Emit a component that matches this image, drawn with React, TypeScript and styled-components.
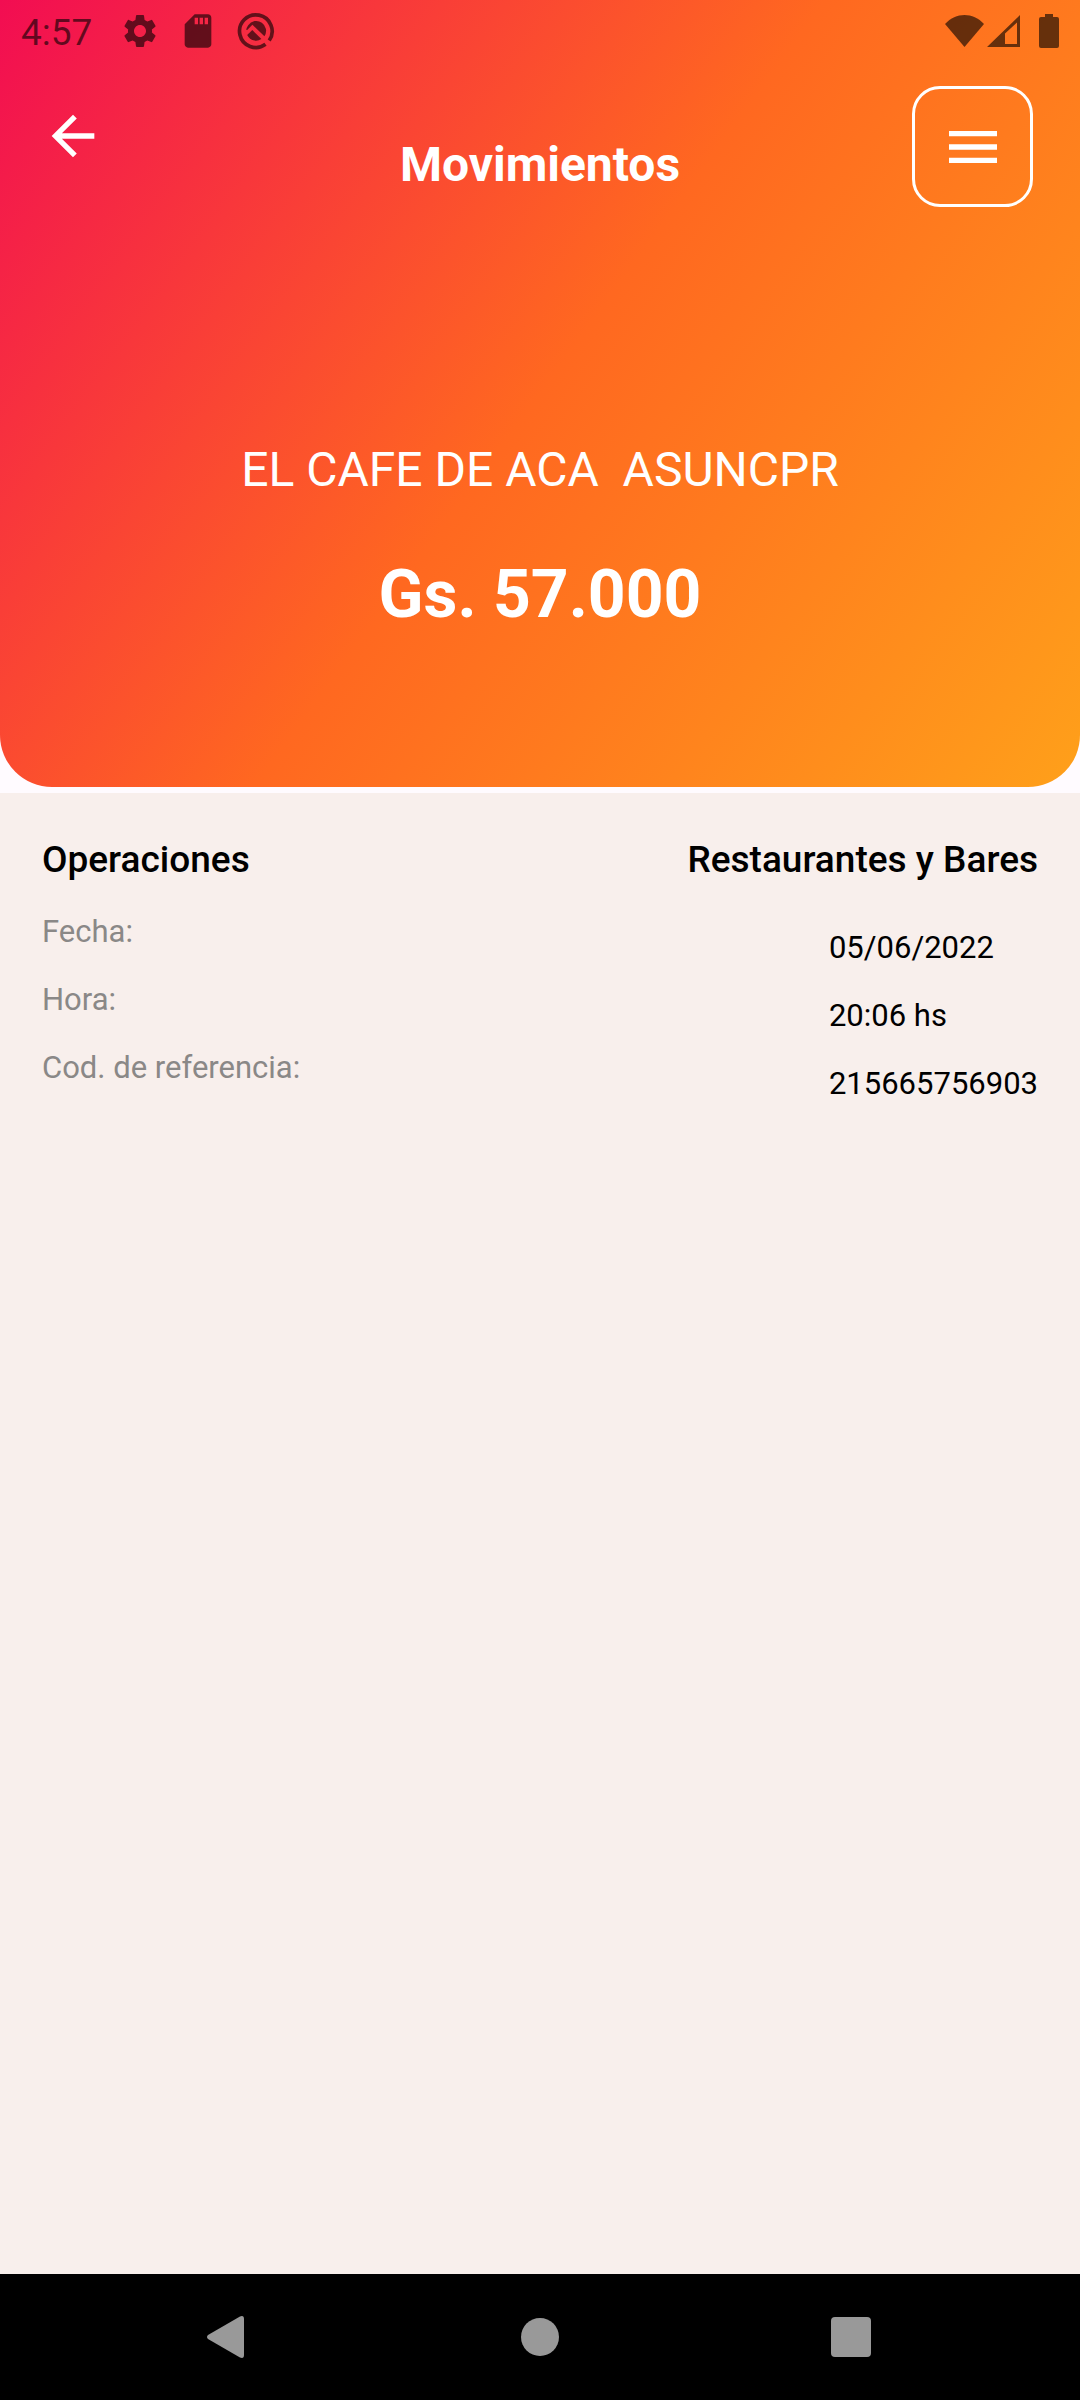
import React from "react";
import styled, { createGlobalStyle } from "styled-components";

const GlobalStyle = createGlobalStyle`
  *, *::before, *::after { box-sizing: border-box; }
  body {
    margin: 0;
    background: #fffbff;
    font-family: Roboto, "Noto Sans", sans-serif;
    color: #000;
  }
`;

const Screen = styled.div`
  display: flex;
  flex-direction: column;
  min-height: 100vh;
`;

const Hero = styled.header`
  margin-bottom: 6px;
  padding-bottom: 153px;
  color: #fff;
  background: linear-gradient(126deg, #f20d52 0%, #ff6820 50%, #ffa01a 100%);
  border-radius: 0 0 52px 52px;
`;

const StatusBar = styled.div`
  display: flex;
  align-items: center;
  height: 66px;
  padding: 0 21px;
  color: rgba(0, 0, 0, 0.6);
`;

const Clock = styled.time`
  margin-right: 28px;
  font-size: 37px;
  line-height: 44px;
`;

const StatusIcons = styled.div<{ $gap: number; $end?: boolean }>`
  display: flex;
  align-items: center;
  gap: ${(p) => p.$gap}px;
  margin-left: ${(p) => (p.$end ? "auto" : "0")};
  padding-bottom: 4px;

  svg {
    display: block;
    fill: currentColor;
  }
`;

const Battery = styled.svg`
  margin-left: 16px;
`;

const TopBar = styled.div`
  display: grid;
  grid-template-columns: 1fr auto 1fr;
  align-items: start;
  padding: 20px 47px 0;
`;

const IconButton = styled.button<{ $outlined?: boolean }>`
  display: flex;
  align-items: center;
  justify-content: center;
  padding: 0;
  color: inherit;
  background: none;
  cursor: pointer;
  width: ${(p) => (p.$outlined ? 121 : 52)}px;
  height: ${(p) => (p.$outlined ? 121 : 100)}px;
  border: ${(p) => (p.$outlined ? "3px solid #fff" : "0")};
  border-radius: 28px;
  justify-self: ${(p) => (p.$outlined ? "end" : "start")};

  svg {
    display: block;
    flex-shrink: 0;
    fill: currentColor;
  }
`;

const Title = styled.h1`
  margin: 51px 0 0;
  font-size: 48px;
  line-height: 56px;
  font-weight: 700;
`;

const Summary = styled.div`
  display: flex;
  flex-direction: column;
  align-items: center;
  gap: 58px;
  padding: 235px 42px 0;
  text-align: center;
`;

const Merchant = styled.p`
  margin: 0;
  font-size: 48px;
  line-height: 56px;
  white-space: pre-wrap;
`;

const Amount = styled.p`
  margin: 0;
  font-size: 66px;
  line-height: 78px;
  font-weight: 700;
`;

const Details = styled.main`
  flex: 1;
  padding: 45px 42px;
  background: #f8efec;
`;

const DetailsHeader = styled.div`
  display: flex;
  justify-content: space-between;
`;

const Heading = styled.h2`
  margin: 0;
  font-size: 37px;
  line-height: 44px;
  font-weight: 500;
`;

const Fields = styled.dl`
  display: grid;
  grid-template-columns: 1fr auto;
  row-gap: 16px;
  margin: 32px 0 0;
  font-size: 31px;
  line-height: 36px;
`;

const Label = styled.dt`
  color: #8a8887;
`;

const Value = styled.dd`
  margin: 0;
  padding-top: 16px;
`;

const NavBar = styled.nav`
  display: grid;
  grid-template-columns: repeat(3, 1fr);
  height: 126px;
  padding: 0 73px;
  background: #000;
`;

const NavButton = styled.button`
  display: flex;
  align-items: center;
  justify-content: center;
  padding: 0;
  border: 0;
  background: none;
  cursor: pointer;

  svg {
    display: block;
    fill: #999;
  }
`;

const fields = [
  { label: "Fecha:", value: "05/06/2022" },
  { label: "Hora:", value: "20:06 hs" },
  { label: "Cod. de referencia:", value: "215665756903" },
];

export default function App() {
  return (
    <>
      <GlobalStyle />
      <Screen>
        <Hero>
          <StatusBar>
            <Clock>4:57</Clock>
            <StatusIcons $gap={18}>
              <svg width="40" height="40" viewBox="0 0 24 24" aria-hidden="true">
                <path d="M19.14 12.94c.04-.3.06-.61.06-.94 0-.32-.02-.64-.07-.94l2.03-1.58a.49.49 0 0 0 .12-.61l-1.92-3.32a.488.488 0 0 0-.59-.22l-2.39.96c-.5-.38-1.03-.7-1.62-.94l-.36-2.54a.484.484 0 0 0-.48-.41h-3.84c-.24 0-.43.17-.47.41l-.36 2.54c-.59.24-1.13.57-1.62.94l-2.39-.96c-.22-.08-.47 0-.59.22L2.74 8.87c-.12.21-.08.47.12.61l2.03 1.58c-.05.3-.09.63-.09.94s.02.64.07.94l-2.03 1.58a.49.49 0 0 0-.12.61l1.92 3.32c.12.22.37.29.59.22l2.39-.96c.5.38 1.03.7 1.62.94l.36 2.54c.05.24.24.41.48.41h3.84c.24 0 .44-.17.47-.41l.36-2.54c.59-.24 1.13-.56 1.62-.94l2.39.96c.22.08.47 0 .59-.22l1.92-3.32c.12-.22.07-.47-.12-.61l-2.01-1.58zM12 15.6c-1.98 0-3.6-1.62-3.6-3.6s1.62-3.6 3.6-3.6 3.6 1.62 3.6 3.6-1.62 3.6-3.6 3.6z" />
              </svg>
              <svg width="40" height="40" viewBox="0 0 24 24" aria-hidden="true">
                <path d="M18 2h-8L4.020 8 4 20c0 1.100.9 2 2 2h12c1.100 0 2-.9 2-2V4c0-1.100-.9-2-2-2zm-6 6h-2V4h2v4zm3 0h-2V4h2v4zm3 0h-2V4h2v4z" />
              </svg>
              <svg width="40" height="40" viewBox="0 0 40 40" aria-hidden="true">
                <path d="M29.500 33.300A16.300 16.300 0 1 1 33.200 29.500" style={{ fill: "none" }} stroke="currentColor" strokeWidth="3.700" />
                <path d="M12.200 14.200A9.700 9.700 0 0 1 28.400 25.300L16.400 13.800L11.200 18.900L10.300 19A9.700 9.700 0 0 1 12.200 14.200Z" />
                <path d="M11.200 24.100L16.300 19L25.400 28.100A9.700 9.700 0 0 1 11.200 24.100Z" />
              </svg>
            </StatusIcons>
            <StatusIcons $gap={3} $end>
              <svg width="39" height="32" viewBox="0 0 39 32" aria-hidden="true">
                <path d="M0 9C11-3 28-3 39 9L19.500 32Z" />
              </svg>
              <svg width="33" height="32" viewBox="0 0 33 32" aria-hidden="true">
                <path fillRule="evenodd" d="M0 32L33 0V32ZM18 18.500V29H30V7.500Z" />
              </svg>
              <Battery width="20" height="34" viewBox="0 0 20 34" aria-hidden="true">
                <path d="M6 0H14V3H18Q20 3 20 5V32Q20 34 18 34H2Q0 34 0 32V5Q0 3 2 3H6Z" />
              </Battery>
            </StatusIcons>
          </StatusBar>

          <TopBar>
            <IconButton type="button" aria-label="Volver">
              <svg width="64" height="64" viewBox="0 0 24 24" aria-hidden="true">
                <path d="M20 11H7.830l5.590-5.590L12 4l-8 8 8 8 1.410-1.410L7.830 13H20v-2z" />
              </svg>
            </IconButton>
            <Title>Movimientos</Title>
            <IconButton type="button" aria-label="Menú" $outlined>
              <svg width="64" height="64" viewBox="0 0 24 24" aria-hidden="true">
                <path d="M3 18h18v-2H3v2zm0-5h18v-2H3v2zm0-7v2h18V6H3z" />
              </svg>
            </IconButton>
          </TopBar>

          <Summary>
            <Merchant>{"EL CAFE DE ACA  ASUNCPR"}</Merchant>
            <Amount>Gs. 57.000</Amount>
          </Summary>
        </Hero>

        <Details>
          <DetailsHeader>
            <Heading>Operaciones</Heading>
            <Heading>Restaurantes y Bares</Heading>
          </DetailsHeader>
          <Fields>
            {fields.map((field) => (
              <React.Fragment key={field.label}>
                <Label>{field.label}</Label>
                <Value>{field.value}</Value>
              </React.Fragment>
            ))}
          </Fields>
        </Details>

        <NavBar>
          <NavButton type="button" aria-label="Atrás">
            <svg width="44" height="42" viewBox="0 0 44 42" aria-hidden="true">
              <path d="M1 19L33 0.500Q37 -1 37 3V39Q37 43 33 41.500L1 23Q-1 21 1 19Z" />
            </svg>
          </NavButton>
          <NavButton type="button" aria-label="Inicio">
            <svg width="38" height="38" viewBox="0 0 38 38" aria-hidden="true">
              <circle cx="19" cy="19" r="19" />
            </svg>
          </NavButton>
          <NavButton type="button" aria-label="Recientes">
            <svg width="40" height="40" viewBox="0 0 40 40" aria-hidden="true">
              <rect width="40" height="40" rx="4" />
            </svg>
          </NavButton>
        </NavBar>
      </Screen>
    </>
  );
}
